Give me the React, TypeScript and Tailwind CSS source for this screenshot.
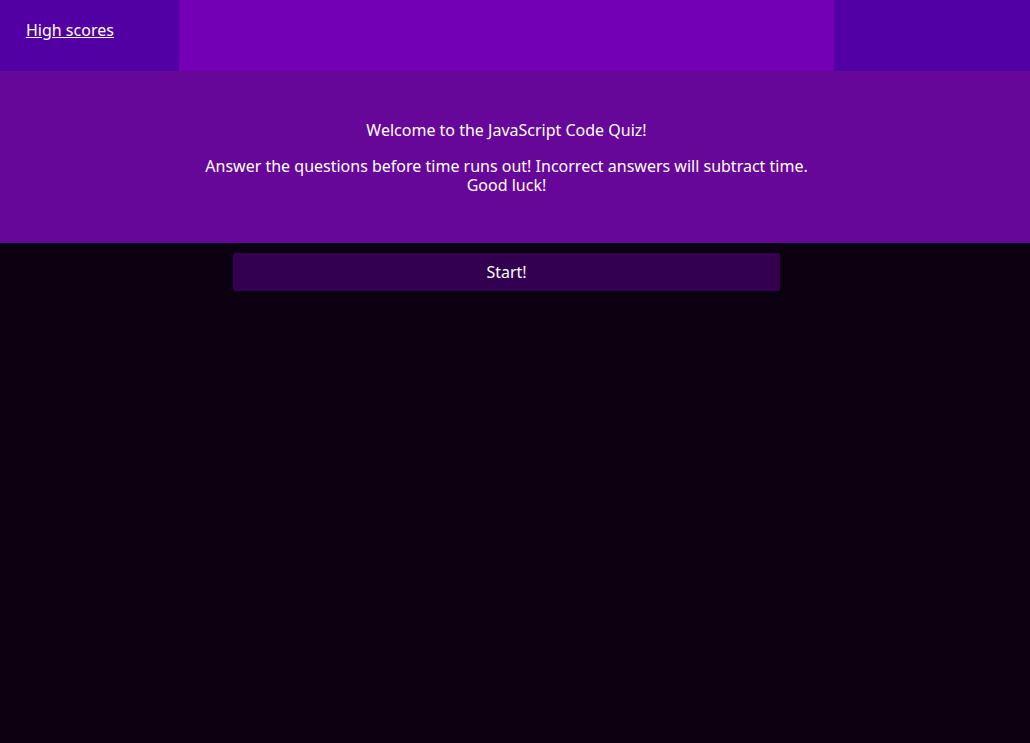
import React from "react";

export default function App() {
  return (
    <div
      className="min-h-[743px] w-full bg-[#0b0012] text-white"
      style={{ fontFamily: '"Noto Sans", "Open Sans", sans-serif' }}
    >
      <header className="grid h-[71px] grid-cols-[179px_655px_1fr]">
        <div className="bg-[#5200a3] pl-[26px] pt-[18px]">
          <a href="#" className="text-[16px] leading-[20px] text-white underline">
            High scores
          </a>
        </div>
        <div className="bg-[#7300b5]" />
        <div className="bg-[#5200a5]" />
      </header>
      <section className="bg-[#660799] pt-[50px] pb-[48px]">
        <div className="w-[1013px] text-center text-[16px] leading-[19px]">
          <p>Welcome to the JavaScript Code Quiz!</p>
          <p className="mt-[17px]">
            Answer the questions before time runs out! Incorrect answers will subtract time.
            <br />
            Good luck!
          </p>
        </div>
      </section>
      <div className="w-[1013px] pt-[10px]">
        <button className="mx-auto block h-[38px] w-[547px] rounded-[2px] bg-[#330050] text-[16px] text-white">
          Start!
        </button>
      </div>
    </div>
  );
}
